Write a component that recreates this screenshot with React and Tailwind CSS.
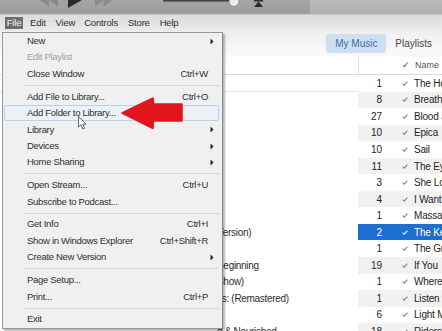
import React from "react";

const menuItems = [
  { l: "New", arrow: true },
  { l: "Edit Playlist", disabled: true },
  { l: "Close Window", s: "Ctrl+W" },
  "sep",
  { l: "Add File to Library...", s: "Ctrl+O" },
  { l: "Add Folder to Library...", hl: true },
  { l: "Library", arrow: true },
  { l: "Devices", arrow: true },
  { l: "Home Sharing", arrow: true },
  "sep",
  { l: "Open Stream...", s: "Ctrl+U" },
  { l: "Subscribe to Podcast..." },
  "sep",
  { l: "Get Info", s: "Ctrl+I" },
  { l: "Show in Windows Explorer", s: "Ctrl+Shift+R" },
  { l: "Create New Version", arrow: true },
  "sep",
  { l: "Page Setup..." },
  { l: "Print...", s: "Ctrl+P" },
  "sep",
  { l: "Exit" },
];

const rows = [
  { n: "1", t: "The Host", a: "" },
  { n: "8", t: "Breath", a: "" },
  { n: "27", t: "Blood and", a: "" },
  { n: "10", t: "Epica", a: "" },
  { n: "10", t: "Sail", a: "" },
  { n: "11", t: "The Eyes", a: "" },
  { n: "3", t: "She Loves", a: "" },
  { n: "4", t: "I Want", a: "" },
  { n: "1", t: "Massacre", a: "" },
  { n: "2", t: "The Keeper", a: "Version)", sel: true },
  { n: "1", t: "The Great", a: "" },
  { n: "19", t: "If You", a: "Beginning" },
  { n: "1", t: "Where", a: "Show)" },
  { n: "1", t: "Listen to", a: "ks: (Remastered)" },
  { n: "6", t: "Light My", a: "" },
  { n: "18", t: "Riders", a: "d & Nourished" },
];

function Check({ color = "#8c8c8c" }) {
  return (
    <svg width="6" height="5" viewBox="0 0 6 5" className="block">
      <path d="M0.6 2.6 L2.3 4.2 L5.4 0.6" fill="none" stroke={color} strokeWidth="1.2" />
    </svg>
  );
}

function SubArrow() {
  return (
    <svg width="4" height="7" viewBox="0 0 4 7" className="block">
      <path d="M0.5 0.5 L3.5 3.5 L0.5 6.5 Z" fill="#222" />
    </svg>
  );
}

export default function App() {
  return (
    <div className="relative w-[442px] h-[331px] overflow-hidden bg-white font-['Liberation_Sans',Arial,sans-serif]">
      {/* toolbar */}
      <div className="flex h-[15px] border-b border-[#c9c9c9]">
        <div className="flex items-start w-[310px] h-full overflow-hidden bg-gradient-to-b from-[#a5a5a5] to-[#9d9d9d]">
          <svg width="18" height="14" viewBox="0 0 18 14" className="ml-[40px] -mt-[7px] shrink-0">
            <path d="M9 0 L0 7 L9 14 Z M18 0 L9 7 L18 14 Z" fill="#8a8a8a" />
          </svg>
          <svg width="14" height="16" viewBox="0 0 14 16" className="ml-[10px] -mt-[8px] shrink-0">
            <path d="M0 0 L14 8 L0 16 Z" fill="#2b2b2b" />
          </svg>
          <svg width="17" height="14" viewBox="0 0 17 14" className="ml-[13px] -mt-[7px] shrink-0">
            <path d="M0 0 L8.5 7 L0 14 Z M8.5 0 L17 7 L8.5 14 Z" fill="#8a8a8a" />
          </svg>
          <svg width="84" height="10" viewBox="0 0 84 10" className="ml-[51px] shrink-0">
            <rect x="0" y="0" width="70" height="1.6" fill="#474747" />
            <circle cx="71" cy="1.5" r="5" fill="#ececec" stroke="#7a7a7a" strokeWidth="0.8" />
          </svg>
          <svg width="11" height="8" viewBox="0 0 11 8" className="ml-[6px] shrink-0">
            <rect x="1" y="0" width="9" height="1.5" fill="#2a2a2a" />
            <path d="M1 7 L5.5 1.5 L10 7 Z" fill="#2a2a2a" />
          </svg>
        </div>
        <div className="flex-1 bg-gradient-to-b from-[#b9b9b9] to-[#b1b1b1]" />
      </div>

      {/* menu bar */}
      <div className="flex items-center h-[16px] bg-gradient-to-b from-[#dcdcdc] to-[#eaeaea] text-[9.5px] tracking-[-0.2px] text-[#2e2e2e]">
        <div className="ml-[5px] h-[12px] w-[18px] flex items-center justify-center bg-[#6d6d6d] text-[#f2f2f2]">File</div>
        <div className="ml-[7px]">Edit</div>
        <div className="ml-[10px]">View</div>
        <div className="ml-[9px]">Controls</div>
        <div className="ml-[10px]">Store</div>
        <div className="ml-[10px]">Help</div>
      </div>

      {/* main content */}
      <div className="flex flex-col">
        <div className="flex items-center justify-end h-[25.5px] pr-[10px] bg-gradient-to-b from-[#efefef] to-[#fafafa]">
          <div className="flex items-center justify-center w-[60px] h-[19px] rounded-[3px] bg-[#cddff0] text-[10px] text-[#3a6fa8]">My Music</div>
          <div className="ml-[9px] text-[10px] text-[#474747]">Playlists</div>
        </div>
        <div className="flex items-center h-[18.5px] border-b border-[#dcdcdc] bg-white">
          <div className="w-[359px] h-full border-r border-[#e2e2e2]" />
          <div className="ml-[43px] text-[9px] text-[#444] leading-none">✓</div>
          <div className="ml-[5px] text-[9px] text-[#555]">Name</div>
        </div>
        {rows.map((r, i) => (
          <div key={i} className="flex h-[16.55px] shrink-0">
            <div
              className={`w-[358px] h-full flex items-center pl-[217px] overflow-hidden whitespace-nowrap text-[10px] tracking-[-0.3px] text-[#2d2d2d] ${
                i === 0 ? "border-b border-[#e4e4e4]" : ""
              }`}
            >
              {r.a}
            </div>
            <div
              className={`flex-1 flex items-center whitespace-nowrap overflow-hidden text-[10px] ${
                r.sel ? "bg-[#1e6fd4] text-white" : i % 2 === 1 ? "bg-[#f1f1f1] text-[#1e1e1e]" : "text-[#1e1e1e]"
              }`}
            >
              <div className="w-[24px] text-right shrink-0">{r.n}</div>
              <div className="ml-[20px] shrink-0">
                <Check color={r.sel ? "#dfe9f7" : "#8c8c8c"} />
              </div>
              <div className="ml-[6px] tracking-[-0.2px]">{r.t}</div>
            </div>
          </div>
        ))}
      </div>

      {/* File dropdown menu */}
      <div className="absolute left-[2px] top-[32px] w-[221px] bg-[#f0f0f0] border border-[#979797] border-r-[#8a8a8a] shadow-[2px_2px_2px_rgba(0,0,0,0.3)] text-[9.5px] tracking-[-0.3px]">
        {menuItems.map((it, i) =>
          it === "sep" ? (
            <div key={i} className="h-[6.5px] flex items-center ml-[22px] mr-[3px]">
              <div className="w-full h-px bg-[#d6d6d6]" />
            </div>
          ) : (
            <div
              key={i}
              className={`flex items-center h-[16.4px] ml-[1px] mr-[3px] pl-[22px] pr-[4px] border rounded-[2px] ${
                it.hl ? "border-[#bfd0e6] bg-[#edf2f8]" : "border-transparent"
              } ${it.disabled ? "text-[#a2a2a2]" : "text-[#2f2f2f]"}`}
            >
              <div className="flex-1 whitespace-nowrap">{it.l}</div>
              {it.s && <div className="whitespace-nowrap">{it.s}</div>}
              <div className="w-[6px] flex justify-end shrink-0">{it.arrow && <SubArrow />}</div>
            </div>
          )
        )}
      </div>

      {/* red arrow */}
      <svg width="64" height="36" viewBox="0 0 64 36" className="absolute left-[120px] top-[95px]">
        <path d="M2 18 L33 3 L33.5 9 L62 9 L62 26 L33.5 26 L33 33.5 Z" fill="#e2141c" stroke="#e2141c" strokeWidth="1.5" strokeLinejoin="round" />
      </svg>

      {/* mouse cursor */}
      <svg width="10" height="15" viewBox="0 0 10 15" className="absolute left-[78px] top-[116px]">
        <path d="M0.5 0.5 L0.5 11 L3 8.7 L4.8 13 L6.5 12.3 L4.7 8.2 L8 8.2 Z" fill="#ffffff" stroke="#555" strokeWidth="0.9" strokeLinejoin="round" />
      </svg>
    </div>
  );
}
